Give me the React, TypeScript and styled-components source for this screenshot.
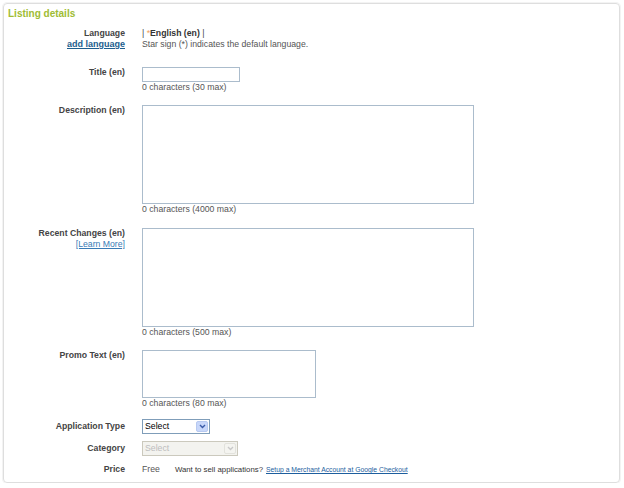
import React from "react";
import styled, { createGlobalStyle } from "styled-components";

const GlobalStyle = createGlobalStyle`
  html, body { margin: 0; padding: 0; background: #ffffff; }
  body { font-family: "Liberation Sans", Arial, sans-serif; }
`;

const Panel = styled.section`
  box-sizing: border-box;
  margin: 3px 0 0 3px;
  width: 617px;
  height: 480px;
  border: 1px solid #dedede;
  border-radius: 4px;
  box-shadow: 0 0 0 1px #f3f3f3;
  padding: 4px 0 0 0;
`;

const Heading = styled.h2`
  margin: 0;
  padding-left: 4px;
  font-size: 10px;
  line-height: 11px;
  font-weight: bold;
  color: #a0bc34;
`;

const Row = styled.div<{ $top: number; $center?: boolean }>`
  display: grid;
  grid-template-columns: 121px 1fr;
  column-gap: 17px;
  margin-top: ${(p) => p.$top}px;
  align-items: ${(p) => (p.$center ? "center" : "start")};
`;

const Label = styled.div`
  text-align: right;
  font-size: 8.7px;
  line-height: 11px;
  font-weight: bold;
  color: #444;
  display: flex;
  flex-direction: column;
  align-items: flex-end;
`;

const AddLink = styled.a`
  font-size: 9px;
  font-weight: bold;
  color: #1d5e8e;
  text-decoration: underline;
  cursor: pointer;
`;

const LearnLink = styled.a`
  font-size: 8.7px;
  font-weight: normal;
  color: #3a7bb5;
  text-decoration: underline;
  cursor: pointer;
`;

const Value = styled.div`
  display: flex;
  flex-direction: column;
  align-items: flex-start;
  font-size: 8.7px;
  line-height: 11px;
  color: #555;
`;

const LangLine = styled.div`
  color: #444;
`;

const Star = styled.span`
  color: #f0a060;
`;

const Strong = styled.b`
  color: #333;
`;

const TextInput = styled.input`
  box-sizing: border-box;
  width: 98px;
  height: 15px;
  margin: 0;
  padding: 0 2px;
  border: 1px solid #abbccc;
  background: #fff;
  outline: none;
  font-size: 9px;
`;

const Area = styled.textarea<{ $w: number; $h: number }>`
  box-sizing: border-box;
  width: ${(p) => p.$w}px;
  height: ${(p) => p.$h}px;
  margin: 0;
  padding: 2px;
  border: 1px solid #abbccc;
  resize: none;
  outline: none;
  display: block;
  font-size: 9px;
  font-family: "Liberation Sans", Arial, sans-serif;
`;

const Counter = styled.div`
  font-size: 8.7px;
  line-height: 11px;
  color: #555;
`;

const SelectBox = styled.div<{ $w: number; $disabled?: boolean }>`
  box-sizing: border-box;
  width: ${(p) => p.$w}px;
  height: 15px;
  border: 1px solid ${(p) => (p.$disabled ? "#cbc9bd" : "#7f9db9")};
  background: ${(p) => (p.$disabled ? "#f3f3ef" : "#ffffff")};
  display: flex;
  align-items: center;
  justify-content: space-between;
  padding: 0 1px 0 2px;
  font-size: 8.7px;
  color: ${(p) => (p.$disabled ? "#bdbdbd" : "#000")};
`;

const ArrowBtn = styled.span<{ $disabled?: boolean }>`
  box-sizing: border-box;
  width: 12px;
  height: 11px;
  border: 1px solid ${(p) => (p.$disabled ? "#e2e2dc" : "#b7c9f0")};
  border-radius: 2px;
  background: ${(p) => (p.$disabled ? "#f4f4f0" : "#c8d7fa")};
  display: flex;
  align-items: center;
  justify-content: center;
`;

const PriceLine = styled.div`
  display: flex;
  align-items: baseline;
  font-size: 8.7px;
  line-height: 11px;
  color: #555;
`;

const Small = styled.span`
  margin-left: 15px;
  font-size: 7.8px;
  color: #333;
`;

const SmallLink = styled.a`
  margin-left: 3px;
  font-size: 6.8px;
  color: #1d5e9e;
  text-decoration: underline;
  cursor: pointer;
`;

const Chevron = ({ color }: { color: string }) => (
  <svg width="7" height="5" viewBox="0 0 7 5">
    <path d="M1 1 L3.5 3.5 L6 1" fill="none" stroke={color} strokeWidth="1.4" />
  </svg>
);

export default function App() {
  return (
    <>
      <GlobalStyle />
      <Panel>
        <Heading>Listing details</Heading>

        <Row $top={9}>
          <Label>
            <span>Language</span>
            <AddLink>add language</AddLink>
          </Label>
          <Value>
            <LangLine>
              | <Star>*</Star>
              <Strong>English (en)</Strong> |
            </LangLine>
            <div>Star sign (*) indicates the default language.</div>
          </Value>
        </Row>

        <Row $top={17}>
          <Label>Title (en)</Label>
          <Value>
            <TextInput type="text" />
            <Counter>0 characters (30 max)</Counter>
          </Value>
        </Row>

        <Row $top={12}>
          <Label>Description (en)</Label>
          <Value>
            <Area $w={332} $h={99} />
            <Counter>0 characters (4000 max)</Counter>
          </Value>
        </Row>

        <Row $top={13}>
          <Label>
            <span>Recent Changes (en)</span>
            <LearnLink>[Learn More]</LearnLink>
          </Label>
          <Value>
            <Area $w={332} $h={99} />
            <Counter>0 characters (500 max)</Counter>
          </Value>
        </Row>

        <Row $top={12}>
          <Label>Promo Text (en)</Label>
          <Value>
            <Area $w={174} $h={48} />
            <Counter>0 characters (80 max)</Counter>
          </Value>
        </Row>

        <Row $top={10} $center>
          <Label>Application Type</Label>
          <Value>
            <SelectBox $w={68}>
              <span>Select</span>
              <ArrowBtn>
                <Chevron color="#3a5ba8" />
              </ArrowBtn>
            </SelectBox>
          </Value>
        </Row>

        <Row $top={7} $center>
          <Label>Category</Label>
          <Value>
            <SelectBox $w={96} $disabled>
              <span>Select</span>
              <ArrowBtn $disabled>
                <Chevron color="#c8c8c8" />
              </ArrowBtn>
            </SelectBox>
          </Value>
        </Row>

        <Row $top={8}>
          <Label>Price</Label>
          <PriceLine>
            <span>Free</span>
            <Small>Want to sell applications?</Small>
            <SmallLink>Setup a Merchant Account at Google Checkout</SmallLink>
          </PriceLine>
        </Row>
      </Panel>
    </>
  );
}
